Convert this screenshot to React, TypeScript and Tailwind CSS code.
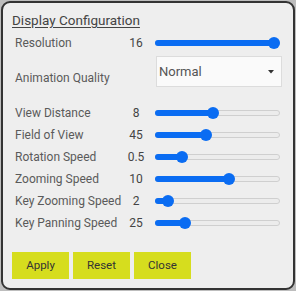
const sliders = [
  { label: "View Distance", value: "8", pos: 0.46 },
  { label: "Field of View", value: "45", pos: 0.396 },
  { label: "Rotation Speed", value: "0.5", pos: 0.19 },
  { label: "Zooming Speed", value: "10", pos: 0.6 },
  { label: "Key Zooming Speed", value: "2", pos: 0.065 },
  { label: "Key Panning Speed", value: "25", pos: 0.21 },
];

function Slider({ pos }: { pos: number }) {
  // thumb center travels from 6px to (width - 6px)
  const center = 6 + pos * 113;
  return (
    <div className="relative w-[125px] h-[12px]">
      <div className="absolute left-0 right-0 top-[3px] h-[6px] rounded-full border border-[#cfcfcf] bg-[#ececec]" />
      <div
        className="absolute left-0 top-[3px] h-[6px] rounded-full bg-[#0a6cf2]"
        style={{ width: center }}
      />
      <div
        className="absolute top-0 w-[12px] h-[12px] rounded-full bg-[#0a6cf2]"
        style={{ left: center - 6 }}
      />
    </div>
  );
}

function Row({ label, value, pos }: { label: string; value: string; pos: number }) {
  return (
    <div className="flex items-center h-[22px]">
      <div className="w-[110px] text-[12px] leading-4 text-[#5a5a5a]">{label}</div>
      <div className="w-[22px] text-center text-[12px] leading-4 text-[#444]">{value}</div>
      <div className="ml-[8px]">
        <Slider pos={pos} />
      </div>
    </div>
  );
}

export default function App() {
  return (
    <div
      className="w-[296px] h-[291px] bg-[#bdbdbd] p-[1px]"
      style={{ fontFamily: "Roboto, 'Liberation Sans', sans-serif" }}
    >
      <div className="w-[294px] h-[289px] border-2 border-[#333] rounded-[9px] bg-[#eeeeee] pl-[9px] pt-[9px]">
        <div className="text-[13.5px] leading-4 text-[#444] underline underline-offset-2">
          Display Configuration
        </div>

        <div className="pl-[3px] mt-[4px]">
          <Row label="Resolution" value="16" pos={1} />

          <div className="flex items-end mt-[2px]">
            <div className="w-[140px] text-[12px] leading-4 text-[#5a5a5a] mb-[1px]">Animation Quality</div>
            <div className="ml-[1px] w-[126px] h-[31px] bg-[#fafafa] border border-[#dcdcdc] flex items-center justify-between pl-[2px] pr-[7px]">
              <span className="text-[13px] text-[#555]">Normal</span>
              <svg width="6" height="4" viewBox="0 0 6 4">
                <path d="M0 0h6L3 3.5z" fill="#333" />
              </svg>
            </div>
          </div>

          <div className="mt-[15px]">
            {sliders.map((s) => (
              <Row key={s.label} {...s} />
            ))}
          </div>
        </div>

        <div className="flex gap-[4px] mt-[18px]">
          {["Apply", "Reset", "Close"].map((b) => (
            <button
              key={b}
              className="w-[57px] h-[27px] bg-[#d6dd1e] text-[11.5px] text-[#333] flex items-center justify-center"
            >
              {b}
            </button>
          ))}
        </div>
      </div>
    </div>
  );
}
